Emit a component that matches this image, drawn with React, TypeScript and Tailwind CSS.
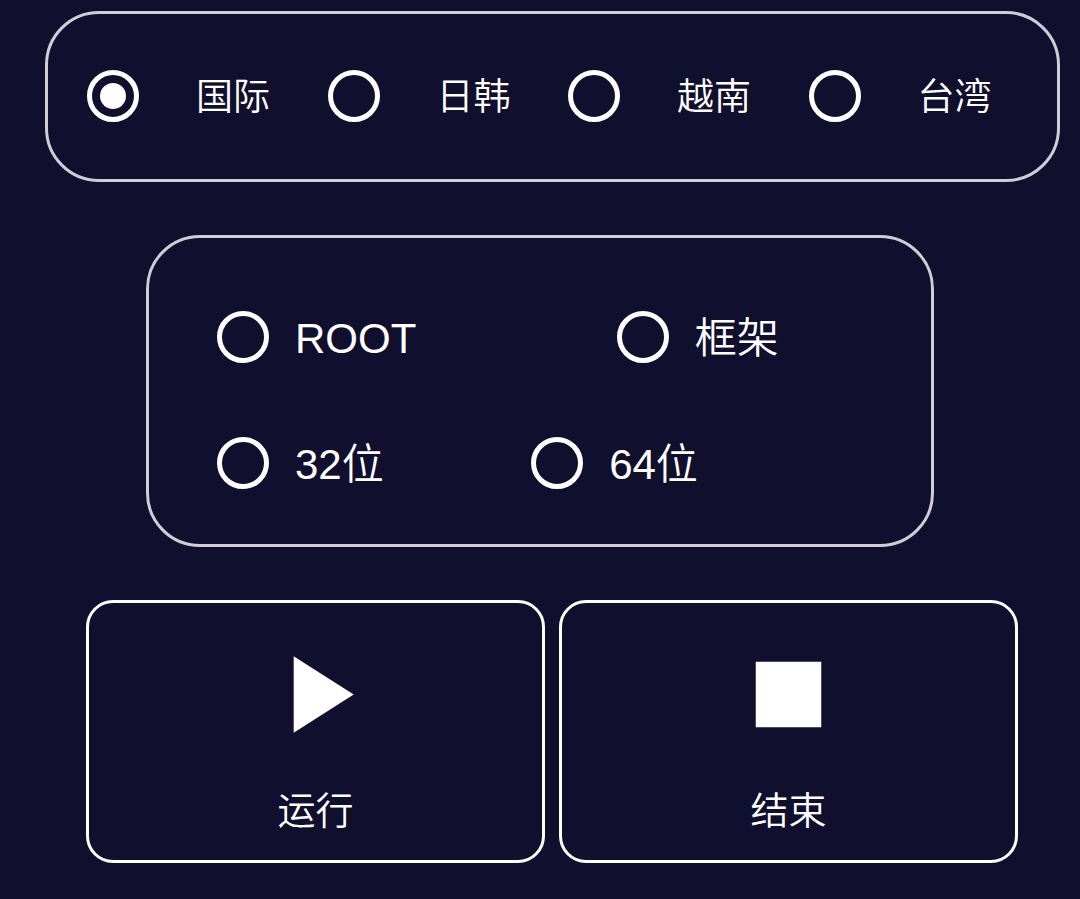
import React, { useState } from 'react';
import { MdPlayArrow, MdStop } from 'react-icons/md';

interface RadioOptionProps {
    name: string;
    label: string;
    checked: boolean;
    onSelect: () => void;
    className?: string;
}

const REGIONS = ['国际', '日韩', '越南', '台湾'];

const RadioOption: React.FC<RadioOptionProps> = ({ name, label, checked, onSelect, className = '' }) => (
    <label className={`flex items-center cursor-pointer whitespace-nowrap ${className}`}>
        <input
            type="radio"
            name={name}
            checked={checked}
            onChange={onSelect}
            className="grid place-items-center shrink-0 size-[52px] appearance-none rounded-full border-5 border-white checked:before:block checked:before:size-[26px] checked:before:rounded-full checked:before:bg-white checked:before:content-['']"
        />
        <span className="pt-1">{label}</span>
    </label>
);

const ActionButton: React.FC<{ label: string; children: React.ReactNode }> = ({ label, children }) => (
    <button
        type="button"
        className="flex flex-1 flex-col items-center gap-[27px] rounded-[27px] border-3 border-white pt-[26px] pb-[25px] text-[38px] leading-[48px] cursor-pointer"
    >
        {children}
        <span>{label}</span>
    </button>
);

const App: React.FC = () => {
    const [region, setRegion] = useState('国际');
    const [mode, setMode] = useState('');
    const [bits, setBits] = useState('');

    return (
        <main
            lang="zh-CN"
            className="flex min-h-screen flex-col gap-[53px] bg-[#100f2d] pt-[11px] pb-9 font-['Liberation_Sans','Noto_Sans_CJK_SC',sans-serif] font-[350] text-white"
        >
            <section className="mr-5 ml-[45px] grid grid-cols-4 rounded-[54px] border-3 border-[#cfcdd5] pt-14 pb-[57px] pr-2 pl-[39px] text-[37px] leading-[48px]">
                {REGIONS.map((item) => (
                    <RadioOption
                        key={item}
                        name="region"
                        label={item}
                        checked={region === item}
                        onSelect={() => setRegion(item)}
                        className="gap-[57px]"
                    />
                ))}
            </section>

            <section className="mx-[146px] flex flex-col gap-[74px] rounded-[54px] border-3 border-[#cfcdd5] pt-[73px] pb-[55px] pl-[68px] text-[42px] leading-[48px]">
                <div className="flex">
                    <RadioOption name="mode" label="ROOT" checked={mode === 'root'} onSelect={() => setMode('root')} className="w-[56%] gap-[26px]" />
                    <RadioOption name="mode" label="框架" checked={mode === 'frame'} onSelect={() => setMode('frame')} className="gap-[26px]" />
                </div>
                <div className="flex">
                    <RadioOption name="bits" label="32位" checked={bits === '32'} onSelect={() => setBits('32')} className="w-[44%] gap-[26px]" />
                    <RadioOption name="bits" label="64位" checked={bits === '64'} onSelect={() => setBits('64')} className="gap-[26px]" />
                </div>
            </section>

            <div className="mr-[62px] ml-[86px] flex gap-[14px]">
                <ActionButton label="运行">
                    <MdPlayArrow className="size-[131px]" />
                </ActionButton>
                <ActionButton label="结束">
                    <MdStop className="size-[131px]" />
                </ActionButton>
            </div>
        </main>
    );
};

export default App;
